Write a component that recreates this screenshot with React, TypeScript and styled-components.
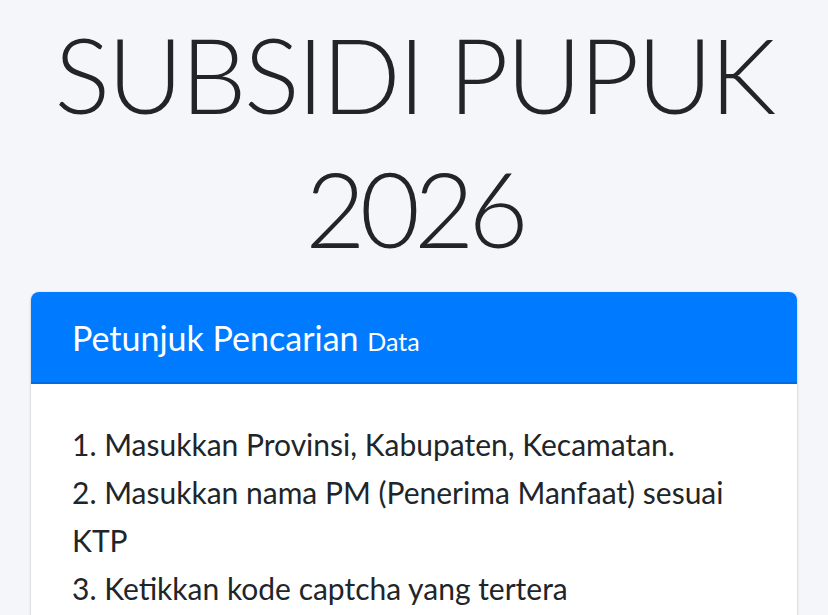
import React from "react";
import styled, { createGlobalStyle } from "styled-components";

const GlobalStyle = createGlobalStyle`
  html, body { margin: 0; padding: 0; }
  body {
    background: #f4f6f9;
    font-family: "Lato", "Noto Sans", sans-serif;
    color: #212529;
  }
`;

const Page = styled.main`
  display: flex;
  flex-direction: column;
  padding: 7px 31px 0;
`;

const Title = styled.h1`
  margin: 0;
  font-family: "Lato", "Noto Sans", sans-serif;
  font-weight: 300;
  font-size: 104px;
  line-height: 134px;
  letter-spacing: -2.5px;
  text-align: center;
  color: #212529;
`;

const Year = styled.span`
  letter-spacing: -6px;
`;

const Card = styled.section`
  margin-top: 17px;
  background: #ffffff;
  border-radius: 8px;
  box-shadow: 0 0 1px rgba(0, 0, 0, 0.125), 0 1px 3px rgba(0, 0, 0, 0.2);
  overflow: hidden;
`;

const CardHeader = styled.header`
  height: 92px;
  box-sizing: border-box;
  padding: 2px 41px 0;
  display: flex;
  align-items: center;
  background: #007bff;
  border-bottom: 2px solid #006be0;
  color: #ffffff;
`;

const HeaderTitle = styled.h3`
  margin: 0;
  font-weight: 400;
  font-size: 34px;
  line-height: 1.2;
`;

const Small = styled.small`
  font-size: 25px;
  font-weight: 400;
`;

const CardBody = styled.div`
  padding: 36px 41px 40px;
`;

const Line = styled.p`
  margin: 0;
  font-size: 30px;
  line-height: 48px;
  color: #212529;
`;

const steps = [
  "1. Masukkan Provinsi, Kabupaten, Kecamatan.",
  "2. Masukkan nama PM (Penerima Manfaat) sesuai KTP",
  "3. Ketikkan kode captcha yang tertera",
];

export default function App() {
  return (
    <>
      <GlobalStyle />
      <Page>
        <Title>
          SUBSIDI PUPUK
          <br />
          <Year>2026</Year>
        </Title>
        <Card>
          <CardHeader>
            <HeaderTitle>
              Petunjuk Pencarian <Small>Data</Small>
            </HeaderTitle>
          </CardHeader>
          <CardBody>
            {steps.map((s) => (
              <Line key={s}>{s}</Line>
            ))}
          </CardBody>
        </Card>
      </Page>
    </>
  );
}
